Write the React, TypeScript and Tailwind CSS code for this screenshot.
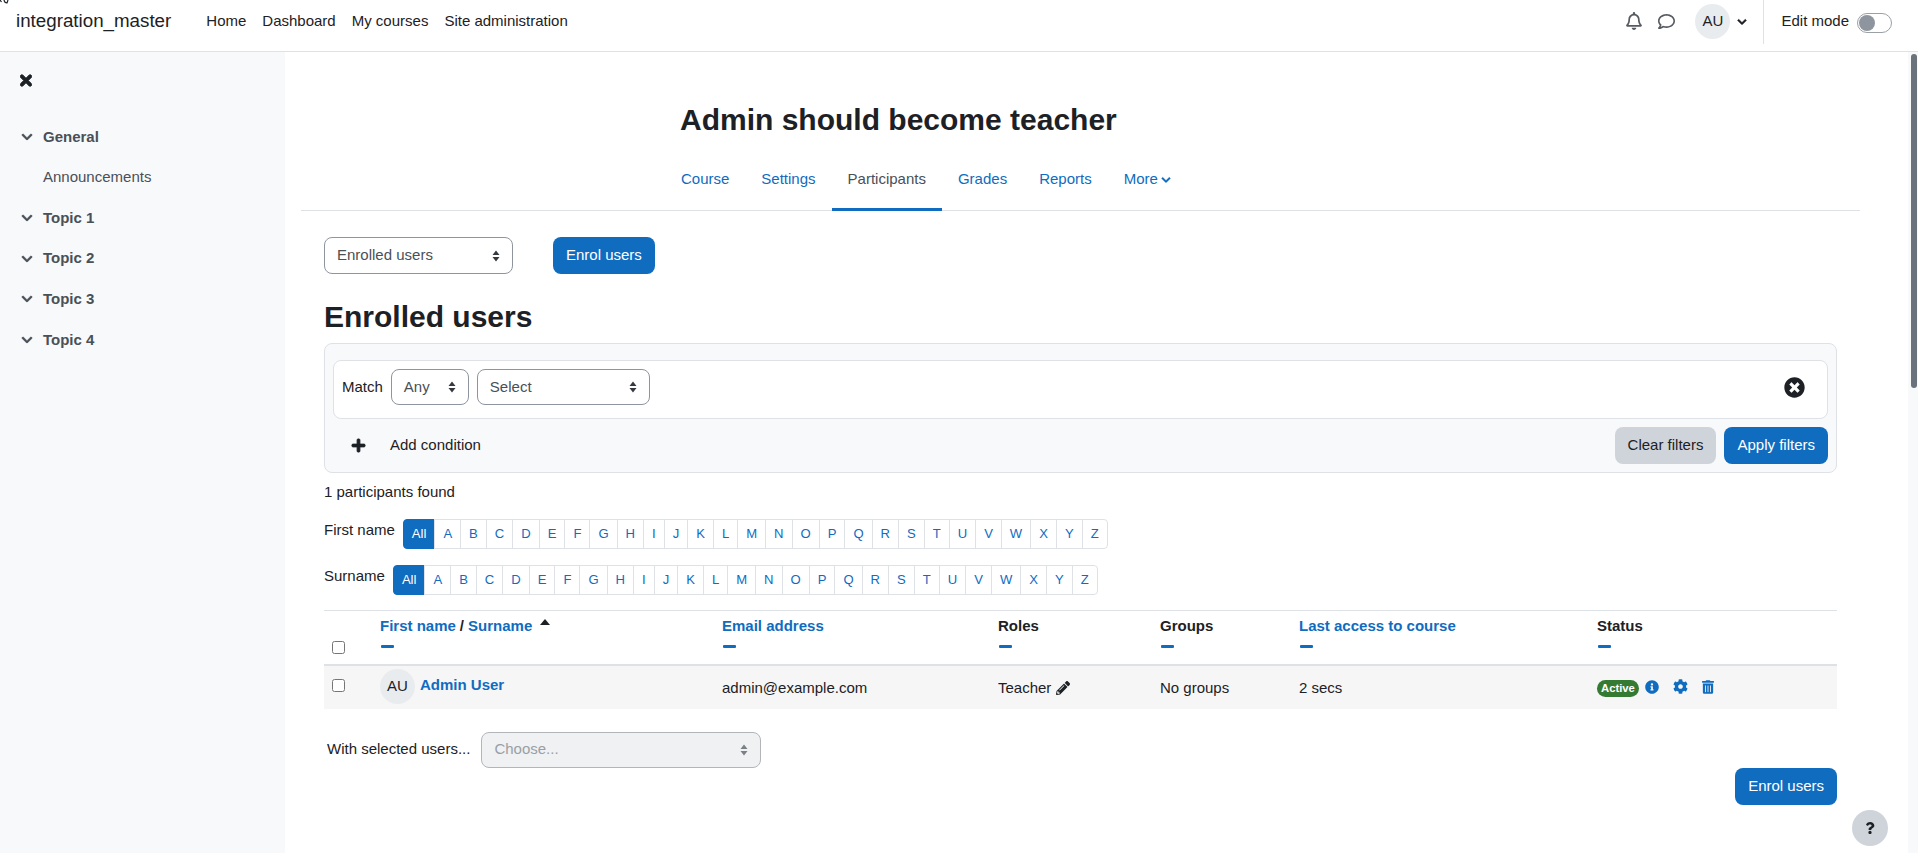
import { FaChevronDown, FaTimes, FaPlus, FaTimesCircle, FaInfoCircle, FaCog, FaTrashAlt, FaPencilAlt, FaQuestion, FaRegBell, FaRegComment } from 'react-icons/fa'

const letters = 'A B C D E F G H I J K L M N O P Q R S T U V W X Y Z'.split(' ')
const sections = ['Topic 1', 'Topic 2', 'Topic 3', 'Topic 4']
const tabs = ['Course', 'Settings', 'Participants', 'Grades', 'Reports']

function Caret({ className = 'text-[#343a40]' }: { className?: string }) {
    return (
        <svg width="8" height="12" viewBox="0 0 8 12" className={className}>
            <path d="M0.5 5 L4 0.5 L7.5 5 Z M0.5 7 L7.5 7 L4 11.5 Z" fill="currentColor" />
        </svg>
    )
}

function Select({ label, className }: { label: string; className: string }) {
    return (
        <div className={`flex items-center justify-between rounded-lg border border-[#8f959e] bg-white pl-3 pr-3 text-[#495057] ${className}`}>
            <span>{label}</span>
            <Caret />
        </div>
    )
}

function LetterBar({ marginTop, label }: { marginTop: string; label: string }) {
    return (
        <div className={`flex items-start gap-2 ${marginTop}`}>
            <span className="leading-[22px]">{label}</span>
            <div className="flex text-[13.07px] leading-[20px]">
                <a className="rounded-l-[4px] border border-[#0f6cbf] bg-[#0f6cbf] px-2 py-1 text-white">All</a>
                {letters.map((l, i) => (
                    <a key={l} className={`-ml-px border border-[#dee2e6] bg-white px-2 py-1 text-[#0f6cbf] first:ml-0 ${i === 25 ? 'rounded-r-[4px]' : ''}`}>
                        {l}
                    </a>
                ))}
            </div>
        </div>
    )
}

function SortDash() {
    return <div className="mt-[9px] ml-px h-[3px] w-[13px] rounded-[1px] bg-[#0f6cbf]" />
}

export default function App() {
    return (
        <div className="relative flex h-[853px] flex-col overflow-hidden bg-white font-['Liberation_Sans',Arial,sans-serif] text-[15px] text-[#1d2125]">
            <svg width="9" height="4" viewBox="0 0 9 4" className="absolute top-0 left-0 text-[#1d2125]">
                <path d="M0 0 L1.5 2 M4 0 Q4.5 3 7 3 L8 0" stroke="currentColor" strokeWidth="1.2" fill="none" />
            </svg>

            <header className="flex h-[52px] shrink-0 items-start border-b border-[#dee2e6] bg-white pl-4">
                <a className="mt-[8px] text-[18.75px] leading-[26px]">integration_master</a>
                <nav className="mt-[10px] ml-[35px] flex gap-4 leading-[22px]">
                    <a>Home</a>
                    <a>Dashboard</a>
                    <a>My courses</a>
                    <a>Site administration</a>
                </nav>
                <div className="ml-auto flex h-[44px] items-start pr-[26px]">
                    <FaRegBell className="mt-[12px] h-[18px] w-[18px] text-[#565b61]" />
                    <FaRegComment className="mt-[13px] ml-[14.5px] h-[17px] w-[17px] text-[#565b61]" />
                    <div className="mt-1 ml-[20.5px] flex h-[35px] w-[35px] items-center justify-center rounded-full bg-[#e9ecef]">AU</div>
                    <FaChevronDown className="mt-[17px] ml-[7px] h-[10px] w-[10px] stroke-[30px] text-[#1d2125]" />
                    <div className="ml-4 h-[44px] w-px bg-[#dee2e6]" />
                    <span className="mt-[10px] ml-[17px] leading-[22px]">Edit mode</span>
                    <div className="mt-[13px] ml-2 flex h-5 w-[35px] items-center rounded-full border border-[#9aa0a6] bg-white pl-px">
                        <div className="h-4 w-4 rounded-full bg-[#8f959e]" />
                    </div>
                </div>
            </header>

            <div className="flex min-h-0 flex-1">
                <aside className="w-[285px] shrink-0 bg-[#f8f9fa]">
                    <FaTimes className="mt-5 ml-5 h-[17px] w-3 stroke-[30px] text-[#1d2125]" />
                    <ul className="mt-[27.5px] text-[#495057]">
                        <li className="flex h-[40.6px] items-center font-bold">
                            <FaChevronDown className="ml-[20.5px] h-3 w-3 stroke-[20px]" />
                            <span className="ml-[10.5px]">General</span>
                        </li>
                        <li className="flex h-[40.6px] items-center pl-[43px]">Announcements</li>
                        {sections.map(s => (
                            <li key={s} className="flex h-[40.6px] items-center font-bold">
                                <FaChevronDown className="ml-[20.5px] h-3 w-3 stroke-[20px]" />
                                <span className="ml-[10.5px]">{s}</span>
                            </li>
                        ))}
                    </ul>
                </aside>

                <main className="min-w-0 flex-1 pr-12 pl-4">
                    <h1 className="mt-[50px] ml-[379px] text-[30px] leading-[36px] font-bold">Admin should become teacher</h1>

                    <nav className="mt-5 flex h-[53px] border-b border-[#dee2e6] pl-[364px] text-[#0f6cbf]">
                        {tabs.map(t => (
                            <a
                                key={t}
                                className={`h-[53px] px-4 pt-[10px] leading-[22px] ${t === 'Participants' ? 'border-b-[3px] border-[#0f6cbf] text-[#495057]' : ''}`}
                            >
                                {t}
                            </a>
                        ))}
                        <a className="flex h-[53px] items-start gap-[3px] px-4 pt-[10px] leading-[22px]">
                            More
                            <FaChevronDown className="mt-[7px] h-[10px] w-[10px] stroke-[20px]" />
                        </a>
                    </nav>

                    <div className="px-[23px]">
                        <div className="mt-[26px] flex gap-10">
                            <Select label="Enrolled users" className="h-[37px] w-[189px]" />
                            <button className="h-[37px] rounded-lg bg-[#0f6cbf] px-[13px] text-white">Enrol users</button>
                        </div>

                        <h2 className="mt-[23px] text-[30px] leading-[40px] font-bold">Enrolled users</h2>

                        <div className="mt-[6px] h-[130px] rounded-lg border border-[#dee2e6] bg-[#f8f9fa] px-2 pt-4">
                            <div className="flex h-[59px] items-center rounded-lg border border-[#dee2e6] bg-white pr-[22px] pb-[5px] pl-2">
                                <span>Match</span>
                                <Select label="Any" className="ml-2 h-[36px] w-[78px]" />
                                <Select label="Select" className="ml-2 h-[36px] w-[173px]" />
                                <FaTimesCircle className="ml-auto h-[21px] w-[21px] text-[#1d2125]" />
                            </div>
                            <div className="mt-2 flex items-center">
                                <FaPlus className="ml-[17.5px] h-[15px] w-[15px] stroke-[30px] text-[#1d2125]" />
                                <span className="ml-[24.5px]">Add condition</span>
                                <button className="ml-auto h-[37px] rounded-lg bg-[#ced4da] px-[13px]">Clear filters</button>
                                <button className="ml-2 h-[37px] rounded-lg bg-[#0f6cbf] px-[13px] text-white">Apply filters</button>
                            </div>
                        </div>

                        <p className="mt-[9px] leading-[20px]">1 participants found</p>

                        <LetterBar label="First name" marginTop="mt-[17px]" />
                        <LetterBar label="Surname" marginTop="mt-4" />

                        <table className="mt-[15px] w-full table-fixed border-t border-[#dee2e6]">
                            <thead>
                                <tr className="h-[54px] border-b-2 border-[#dee2e6] text-left">
                                    <th className="w-[56px] pt-[30px] pl-2 align-top">
                                        <input type="checkbox" className="block" />
                                    </th>
                                    <th className="w-[342px] pt-[5px] align-top">
                                        <div className="flex leading-[20px]">
                                            <a className="text-[#0f6cbf]">First name</a>
                                            <span className="mx-1">/</span>
                                            <a className="text-[#0f6cbf]">Surname</a>
                                            <svg width="10" height="6" viewBox="0 0 10 6" className="mt-[3px] ml-2 text-[#1d2125]">
                                                <path d="M0 6 L5 0 L10 6 Z" fill="currentColor" />
                                            </svg>
                                        </div>
                                        <SortDash />
                                    </th>
                                    <th className="w-[276px] pt-[5px] align-top leading-[20px]">
                                        <a className="text-[#0f6cbf]">Email address</a>
                                        <SortDash />
                                    </th>
                                    <th className="w-[162px] pt-[5px] align-top leading-[20px]">
                                        Roles
                                        <SortDash />
                                    </th>
                                    <th className="w-[139px] pt-[5px] align-top leading-[20px]">
                                        Groups
                                        <SortDash />
                                    </th>
                                    <th className="w-[298px] pt-[5px] align-top leading-[20px]">
                                        <a className="text-[#0f6cbf]">Last access to course</a>
                                        <SortDash />
                                    </th>
                                    <th className="pt-[5px] align-top leading-[20px]">
                                        Status
                                        <SortDash />
                                    </th>
                                </tr>
                            </thead>
                            <tbody>
                                <tr className="h-[44px] bg-[#f6f6f7]">
                                    <td className="pl-2 align-top">
                                        <input type="checkbox" className="mt-[13px] block" />
                                    </td>
                                    <td className="align-top">
                                        <div className="mt-[3px] flex items-start gap-[5px]">
                                            <div className="flex h-[35px] w-[35px] items-center justify-center rounded-full bg-[#e9ecef]">AU</div>
                                            <a className="mt-[6px] leading-[20px] font-bold text-[#0f6cbf]">Admin User</a>
                                        </div>
                                    </td>
                                    <td className="pt-px leading-[20px]">admin@example.com</td>
                                    <td className="pt-px">
                                        <div className="flex items-center gap-[5px] leading-[20px]">
                                            Teacher
                                            <FaPencilAlt className="h-[14px] w-[14px] text-[#1d2125]" />
                                        </div>
                                    </td>
                                    <td className="pt-px leading-[20px]">No groups</td>
                                    <td className="pt-px leading-[20px]">2 secs</td>
                                    <td className="pt-px">
                                        <div className="flex items-center">
                                            <span className="mt-px flex h-[17px] w-[42px] items-center justify-center rounded-full bg-[#357a32] text-[11.25px] font-bold text-white">Active</span>
                                            <FaInfoCircle className="mb-[2px] ml-[6px] h-[14px] w-[14px] text-[#0f6cbf]" />
                                            <FaCog className="mb-[2px] ml-[13.5px] h-[15px] w-[15px] text-[#0f6cbf]" />
                                            <FaTrashAlt className="mb-[2px] ml-[14.5px] h-[14px] w-[12px] text-[#0f6cbf]" />
                                        </div>
                                    </td>
                                </tr>
                            </tbody>
                        </table>

                        <div className="mt-[23px] flex items-center pl-[3px]">
                            <span>With selected users...</span>
                            <div className="ml-[11px] flex h-[36px] w-[280px] items-center justify-between rounded-lg border border-[#b2b6bb] bg-[#eff1f3] px-3 text-[#9a9fa5]">
                                <span>Choose...</span>
                                <Caret className="text-[#7b8086]" />
                            </div>
                        </div>

                        <div className="flex justify-end">
                            <button className="h-[37px] rounded-lg bg-[#0f6cbf] px-[13px] text-white">Enrol users</button>
                        </div>
                    </div>
                </main>

                <div className="w-[10px] shrink-0 bg-[#f8f9fa] pt-[2px] pl-[3px]">
                    <div className="h-[334px] w-[6px] rounded-full bg-[#6a737b]" />
                </div>
            </div>

            <button className="absolute right-[30px] bottom-[7px] flex h-9 w-9 items-center justify-center rounded-full bg-[#ced4da]">
                <FaQuestion className="h-3 w-3 text-[#1d2125]" />
            </button>
        </div>
    )
}
